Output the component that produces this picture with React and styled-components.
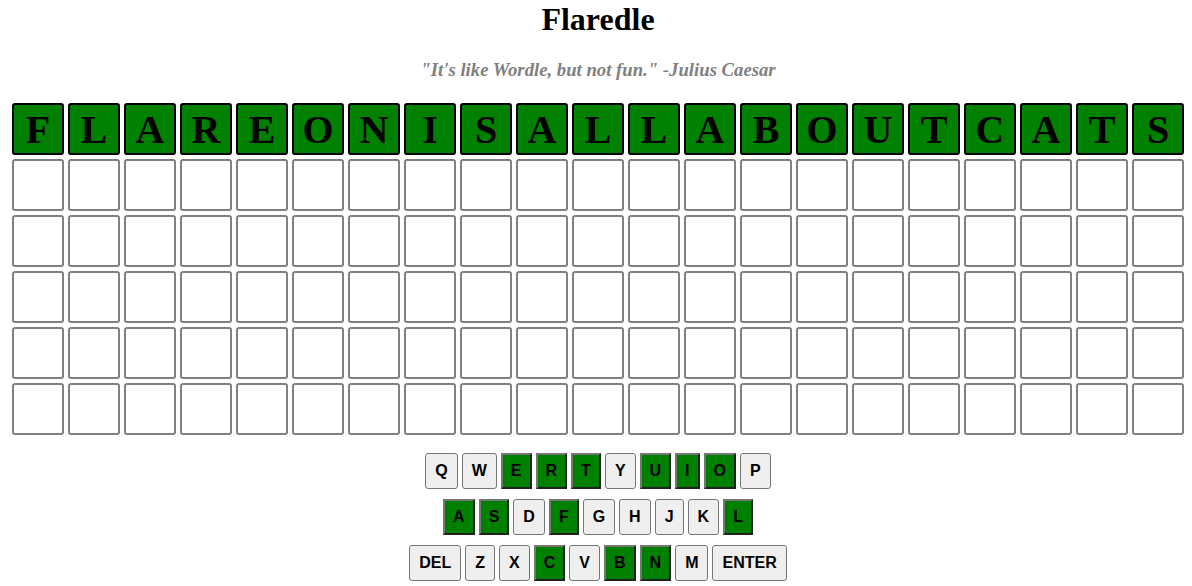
import React from "react";
import styled, { createGlobalStyle, css } from "styled-components";

const GlobalStyle = createGlobalStyle`
  html, body {
    margin: 0;
    padding: 0;
    background: #ffffff;
  }
  body {
    font-family: "Liberation Serif", "Times New Roman", serif;
  }
`;

const Page = styled.main`
  display: flex;
  flex-direction: column;
  align-items: center;
  padding: 1px 0 0 4px;
`;

const Title = styled.h1`
  margin: 0;
  font-family: "Liberation Serif", "Times New Roman", serif;
  font-size: 32px;
  font-weight: bold;
  line-height: normal;
  color: #000;
`;

const Subtitle = styled.h3`
  margin: 21px 0 0;
  font-family: "Liberation Serif", "Times New Roman", serif;
  font-size: 18.72px;
  font-weight: bold;
  font-style: italic;
  line-height: normal;
  color: #808080;
`;

const Board = styled.div`
  margin-top: 22px;
  display: grid;
  grid-template-columns: repeat(21, 52px);
  grid-auto-rows: 52px;
  gap: 4px;
`;

const Tile = styled.div`
  box-sizing: border-box;
  width: 52px;
  height: 52px;
  border-radius: 3px;
  display: flex;
  align-items: center;
  justify-content: center;
  font-family: "Liberation Serif", "Times New Roman", serif;
  font-size: 40px;
  font-weight: bold;
  color: #000;
  ${({ $filled }) =>
    $filled
      ? css`
          background: #008000;
          border: 2px solid #000;
        `
      : css`
          background: #fff;
          border: 2px solid #808080;
        `}
`;

const Keyboard = styled.div`
  margin-top: 18px;
  display: flex;
  flex-direction: column;
  align-items: center;
  gap: 10px;
`;

const KeyRow = styled.div`
  display: flex;
  gap: 4px;
`;

const Key = styled.button`
  box-sizing: border-box;
  height: 36px;
  margin: 0;
  font-family: "Liberation Sans", Arial, sans-serif;
  font-size: 16px;
  font-weight: bold;
  line-height: 18px;
  color: #000;
  cursor: pointer;
  ${({ $used }) =>
    $used
      ? css`
          background: #008000;
          border: 2px outset #767676;
          border-radius: 0;
          padding: 7px 8px;
        `
      : css`
          background: #efefef;
          border: 1px solid #767676;
          border-radius: 3px;
          padding: 8px 9px;
        `}
`;

const answer = "FLAREONISALLABOUTCATS".split("");
const used = new Set("FLAREONISBUTC".split(""));
const rows = [
  ["Q", "W", "E", "R", "T", "Y", "U", "I", "O", "P"],
  ["A", "S", "D", "F", "G", "H", "J", "K", "L"],
  ["DEL", "Z", "X", "C", "V", "B", "N", "M", "ENTER"],
];

export default function App() {
  const tiles = [];
  answer.forEach((ch, i) =>
    tiles.push(
      <Tile key={`a${i}`} $filled>
        {ch}
      </Tile>
    )
  );
  for (let r = 0; r < 5; r++) {
    for (let c = 0; c < 21; c++) {
      tiles.push(<Tile key={`e${r}-${c}`} />);
    }
  }
  return (
    <>
      <GlobalStyle />
      <Page>
        <Title>Flaredle</Title>
        <Subtitle>"It's like Wordle, but not fun." -Julius Caesar</Subtitle>
        <Board>{tiles}</Board>
        <Keyboard>
          {rows.map((row, ri) => (
            <KeyRow key={ri}>
              {row.map((k) => (
                <Key key={k} $used={used.has(k)}>
                  {k}
                </Key>
              ))}
            </KeyRow>
          ))}
        </Keyboard>
      </Page>
    </>
  );
}
